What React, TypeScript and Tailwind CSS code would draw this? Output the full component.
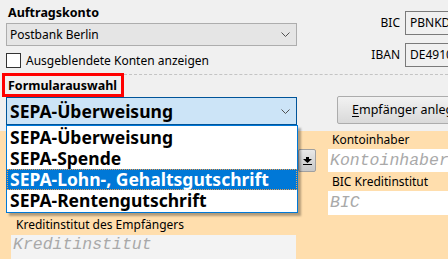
import React from "react";

function Chevron() {
  return (
    <svg width="9" height="5" viewBox="0 0 9 5" className="shrink-0">
      <path d="M0.5 0.5 L4.5 4.5 L8.5 0.5" fill="none" stroke="#505050" strokeWidth="1" />
    </svg>
  );
}

function DownIcon() {
  return (
    <svg width="9" height="8" viewBox="0 0 9 8">
      <rect x="3" y="0" width="3" height="2" fill="#000" />
      <path d="M0 2 H9 L4.5 6 Z" fill="#000" />
      <rect x="0" y="7" width="9" height="1" fill="#000" />
    </svg>
  );
}

const items = [
  "SEPA-Überweisung",
  "SEPA-Spende",
  "SEPA-Lohn-, Gehaltsgutschrift",
  "SEPA-Rentengutschrift",
];

export default function App() {
  return (
    <div className="w-[448px] h-[259px] overflow-hidden bg-[#f0f0f0] text-black [font-family:'Noto_Sans',sans-serif] text-[12px] flex flex-col">
      {/* top area */}
      <div className="flex h-[73px] shrink-0">
        <div className="w-[297px] shrink-0 flex flex-col pl-[6px]">
          <div className="h-[23px] pl-[2px] pt-[5px] leading-[15px] font-bold text-[12.5px]">Auftragskonto</div>
          <div className="h-[23px] border border-[#adadad] bg-[#e5e5e5] flex items-center justify-between pl-[3px] pr-[6px]">
            <span className="leading-[16px]">Postbank Berlin</span>
            <Chevron />
          </div>
          <div className="mt-[7px] flex items-center h-[15px]">
            <div className="w-[15px] h-[15px] border border-[#333] bg-white shrink-0" />
            <span className="ml-[5px] leading-[15px]">Ausgeblendete Konten anzeigen</span>
          </div>
        </div>
        <div className="flex-1 flex flex-col pt-[11px] gap-[8px]">
          <div className="flex items-center h-[24px]">
            <span className="w-[103px] text-right shrink-0">BIC</span>
            <div className="ml-[5px] w-[80px] shrink-0 h-[24px] border border-[#7a7a7a] bg-[#f0f0f0] pl-[4px] flex items-center whitespace-nowrap">PBNKDEFF</div>
          </div>
          <div className="flex items-center h-[24px]">
            <span className="w-[103px] text-right shrink-0">IBAN</span>
            <div className="ml-[5px] w-[80px] shrink-0 h-[24px] border border-[#7a7a7a] bg-[#f0f0f0] pl-[4px] flex items-center whitespace-nowrap">DE4910010</div>
          </div>
        </div>
      </div>

      {/* Formularauswahl label + separator */}
      <div className="flex h-[24px] items-start shrink-0">
        <div className="ml-[2px] w-[122px] h-[24px] border-[3px] border-[#ff0000] pl-[3px] pt-[1px] flex items-center font-bold text-[12.5px] leading-[15px] shrink-0">
          Formularauswahl
        </div>
        <div className="flex-1 mt-[1px] border-t border-dashed border-[#c4c4c4]" />
      </div>

      {/* select row */}
      <div className="flex h-[28px] shrink-0">
        <div className="relative ml-[6px] w-[291px] h-[28px] shrink-0 border border-[#005499] bg-[#cce4f7] flex items-center justify-between pl-[3px] pr-[6px]">
          <span className="font-bold text-[17.5px] leading-[20px]">SEPA-Überweisung</span>
          <Chevron />
          <div className="absolute left-[-1px] top-[27px] w-[292px] z-10 border border-[#0078d7] bg-white pt-[1px] pb-[1px] shadow-[3px_3px_2px_rgba(0,0,0,0.3)]">
            {items.map((t, i) => (
              <div
                key={t}
                className={
                  i === 2
                    ? "h-[21px] pl-[2px] flex items-center bg-[#0078d7] text-white border border-dotted border-[#f0a050] font-bold text-[17.5px] leading-[21px] whitespace-nowrap"
                    : "h-[21px] pl-[3px] flex items-center font-bold text-[17.5px] leading-[21px] whitespace-nowrap"
                }
              >
                {t}
              </div>
            ))}
          </div>
        </div>
        <button className="ml-[40px] -mt-[1px] h-[28px] w-[140px] shrink-0 border border-[#acacac] rounded-[2px] bg-gradient-to-b from-[#f2f2f2] to-[#d9d9d9] text-left pl-[14px] text-[12.5px] leading-[16px] whitespace-nowrap">
          <span className="underline underline-offset-2">E</span>mpfänger anlegen
        </button>
      </div>

      {/* beige panel */}
      <div className="mt-[6px] flex-1 bg-[#ffdead] flex">
        <div className="w-[296px] shrink-0 flex flex-col pt-[84px]">
          <div className="h-[20px] pl-[16px] leading-[20px]">Kreditinstitut des Empfängers</div>
          <div className="ml-[11px] h-[30px] bg-[#f3f3f3] pl-[2px] flex items-start">
            <span className="italic text-[16.5px] leading-[20px] text-[#a9a9a9] [font-family:'Liberation_Mono',monospace]">Kreditinstitut</span>
          </div>
        </div>
        <div className="flex-1 flex">
          <div className="w-[32px] shrink-0 pl-[2px] pt-[18px]">
            <div className="w-[18px] h-[23px] border border-[#a0a0a0] rounded-[2px] bg-gradient-to-b from-[#e8e8e8] to-[#c8c8c8] flex items-center justify-center">
              <DownIcon />
            </div>
          </div>
          <div className="flex-1 flex flex-col">
            <div className="h-[18px] pl-[4px] leading-[18px]">Kontoinhaber</div>
            <div className="h-[23px] bg-white pl-[2px] flex items-center overflow-hidden">
              <span className="italic text-[16.5px] leading-[20px] text-[#a9a9a9] [font-family:'Liberation_Mono',monospace] whitespace-nowrap">Kontoinhaber</span>
            </div>
            <div className="h-[19px] pl-[4px] leading-[19px]">BIC Kreditinstitut</div>
            <div className="h-[24px] bg-white pl-[2px] flex items-center">
              <span className="italic text-[16.5px] leading-[20px] text-[#a9a9a9] [font-family:'Liberation_Mono',monospace]">BIC</span>
            </div>
          </div>
        </div>
      </div>
    </div>
  );
}
